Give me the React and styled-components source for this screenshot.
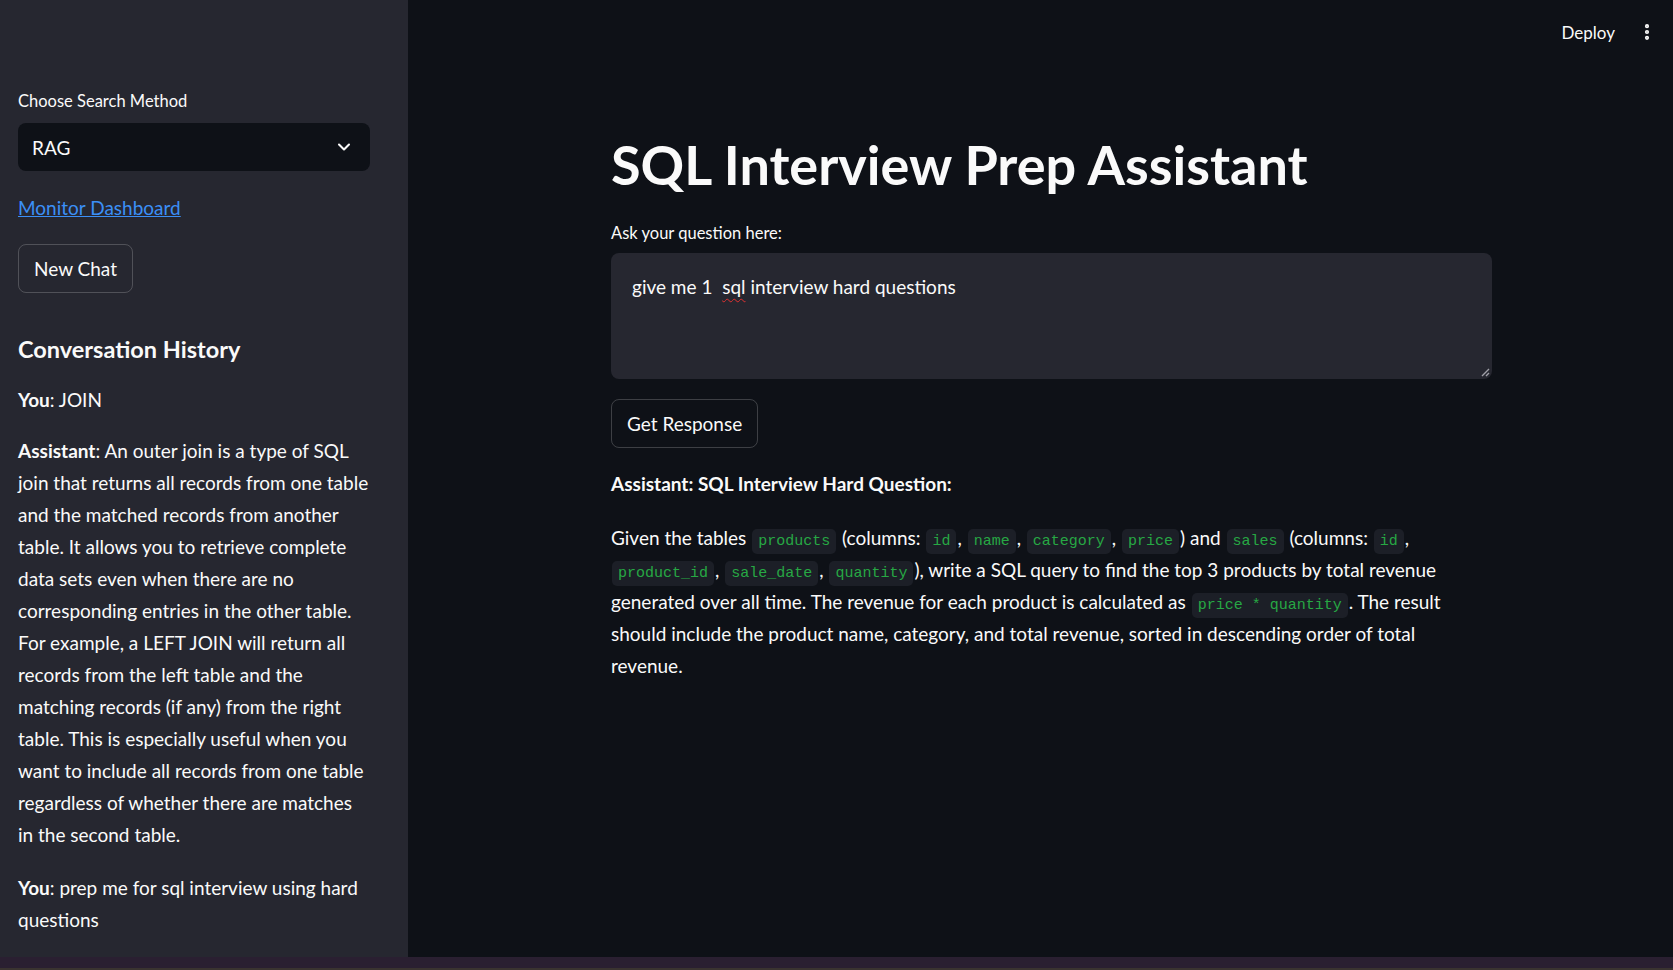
import React from 'react';
import styled, { createGlobalStyle } from 'styled-components';
import { ChevronDown, EllipsisVertical } from 'lucide-react';

const GlobalStyle = createGlobalStyle`
    body {
        margin: 0;
        background: #0e1117;
        color: #fafafa;
        font-family: Lato, "Noto Sans", sans-serif;
    }
`;

const Page = styled.div`
    display: flex;
    height: 957px;
    background: #0e1117;
`;

const BottomStrip = styled.div`
    height: 13px;
    background: #2a1f31;
    border-bottom: 2px solid #3a3330;
    box-sizing: border-box;
`;

const Sidebar = styled.aside`
    width: 408px;
    flex-shrink: 0;
    background: #262730;
    box-sizing: border-box;
    padding: 87px 38px 0 18px;
    overflow: hidden;
`;

const Label = styled.div`
    font-size: 16.5px;
    line-height: 28px;
    margin-bottom: ${p => p.gap || 8}px;
`;

const Select = styled.div`
    height: 48px;
    background: #0e1117;
    border-radius: 8px;
    display: flex;
    align-items: center;
    justify-content: space-between;
    padding: 0 16px 0 14px;
    font-size: 19px;
`;

const LinkText = styled.a`
    display: block;
    margin-top: 21px;
    line-height: 32px;
    font-size: 19px;
    color: #3b8ff6;
    text-decoration: underline;
    width: fit-content;
`;

const Button = styled.button`
    display: block;
    margin-top: ${p => p.top || 20}px;
    height: 49px;
    padding: 0 15px;
    background: transparent;
    color: #fafafa;
    font-family: inherit;
    font-size: 19px;
    border: 1px solid rgba(250, 250, 250, 0.2);
    border-radius: 8px;
`;

const SideHeading = styled.h3`
    margin: 42px 0 0;
    font-size: 23.5px;
    line-height: 29px;
    font-weight: 700;
`;

const Para = styled.p`
    margin: ${p => p.top || 0}px 0 0;
    font-size: ${p => p.size || 19}px;
    line-height: 32px;
`;

const Main = styled.main`
    flex: 1;
    display: flex;
    flex-direction: column;
`;

const Header = styled.header`
    height: 64px;
    display: flex;
    align-items: center;
    justify-content: flex-end;
    gap: 22px;
    padding-right: 16px;
    font-size: 17px;
`;

const Content = styled.div`
    padding: 68px 181px 0 203px;
`;

const Answer = styled(Para)`
    margin-right: 8px;
`;

const Title = styled.h1`
    margin: 0;
    font-size: 54px;
    line-height: 66px;
    font-weight: 700;
`;

const TextArea = styled.div`
    position: relative;
    height: 126px;
    background: #262730;
    border-radius: 8px;
    box-sizing: border-box;
    padding: 20px 21px;
    font-size: 19px;
    line-height: 28px;
    white-space: pre;
`;

const Misspelled = styled.span`
    text-decoration: underline wavy #e03030;
    text-decoration-thickness: 1px;
    text-underline-offset: 4px;
`;

const Grip = styled.svg`
    position: absolute;
    right: 2px;
    bottom: 2px;
`;

const Code = styled.code`
    font-family: "Liberation Mono", "DejaVu Sans Mono", monospace;
    font-size: 15px;
    line-height: 1;
    color: #27a844;
    background: #1c1f27;
    border-radius: 5px;
    padding: 4px 6px;
    margin: 0 1px;
`;

const App = () => {
    return <React.Fragment>
        <GlobalStyle />
        <Page>
            <Sidebar>
                <Label>Choose Search Method</Label>
                <Select>
                    <span>RAG</span>
                    <ChevronDown size={20} strokeWidth={2.5} />
                </Select>
                <LinkText href="#">Monitor Dashboard</LinkText>
                <Button>New Chat</Button>
                <SideHeading>Conversation History</SideHeading>
                <Para top={20}><b>You</b>: JOIN</Para>
                <Para top={19}>
                    <b>Assistant</b>: An outer join is a type of SQL join that returns all records from one table and the matched records from another table. It allows you to retrieve complete data sets even when there are no corresponding entries in the other table. For example, a LEFT JOIN will return all records from the left table and the matching records (if any) from the right table. This is especially useful when you want to include all records from one table regardless of whether there are matches in the second table.
                </Para>
                <Para top={21}><b>You</b>: prep me for sql interview using hard questions</Para>
            </Sidebar>
            <Main>
                <Header>
                    <span>Deploy</span>
                    <EllipsisVertical size={20} strokeWidth={3} />
                </Header>
                <Content>
                    <Title>SQL Interview Prep Assistant</Title>
                    <Label gap={6} style={{ marginTop: 21 }}>Ask your question here:</Label>
                    <TextArea>
                        give me 1  <Misspelled>sql</Misspelled> interview hard questions
                        <Grip width="10" height="10" viewBox="0 0 10 10">
                            <path d="M9 2 L2 9 M9 6 L6 9" stroke="#a0a0a8" strokeWidth="1.4" />
                        </Grip>
                    </TextArea>
                    <Button>Get Response</Button>
                    <Para top={20}><b>Assistant: SQL Interview Hard Question:</b></Para>
                    <Answer top={22}>
                        Given the tables <Code>products</Code> (columns: <Code>id</Code>, <Code>name</Code>, <Code>category</Code>, <Code>price</Code>) and <Code>sales</Code> (columns: <Code>id</Code>, <Code>product_id</Code>, <Code>sale_date</Code>, <Code>quantity</Code>), write a SQL query to find the top 3 products by total revenue generated over all time. The revenue for each product is calculated as <Code>price * quantity</Code>. The result should include the product name, category, and total revenue, sorted in descending order of total revenue.
                    </Answer>
                </Content>
            </Main>
        </Page>
        <BottomStrip />
    </React.Fragment>
}

export default App;
